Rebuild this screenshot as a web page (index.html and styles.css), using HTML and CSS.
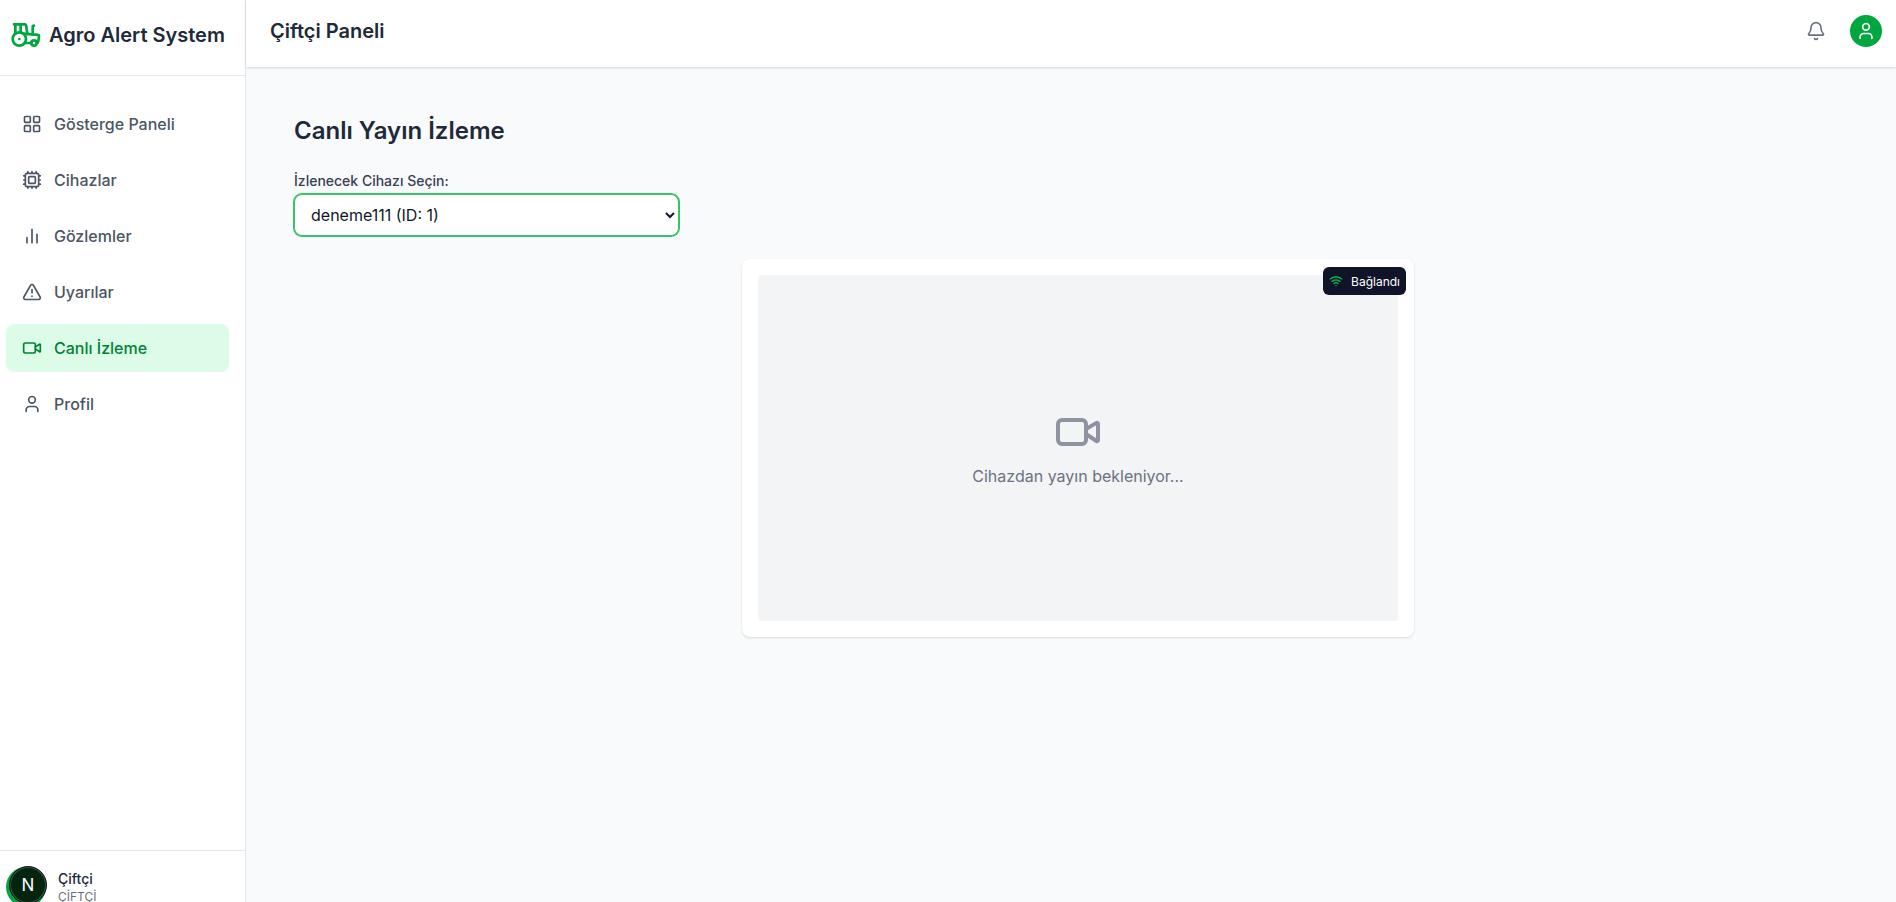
FILE: index.html
```html
<!DOCTYPE html>
<html lang="tr">
<head>
  <meta charset="UTF-8" />
  <meta name="viewport" content="width=device-width, initial-scale=1.0"/>
  <title>Agro Alert System</title>
  <link rel="stylesheet" href="styles.css">
</head>
<body>
  <aside class="sidebar">
    <div class="brand">
      <svg class="icon brand-icon" viewBox="0 0 24 24">
        <path d="m10 11 11 .9a1 1 0 0 1 .8 1.1l-.665 4.158a1 1 0 0 1-.988.842H20"/>
        <path d="M16 18h-5"/>
        <path d="M18 5a1 1 0 0 0-1 1v5.573"/>
        <path d="M3 4h8.129a1 1 0 0 1 .99.863L13 11.246"/>
        <path d="M4 11V4M7 15h.01M8 10.1V4"/>
        <circle cx="18" cy="18" r="2"/>
        <circle cx="7" cy="15" r="5"/>
      </svg>
      <span>Agro Alert System</span>
    </div>

    <nav class="menu">
      <a href="#">
        <svg class="icon" viewBox="0 0 24 24"><rect x="3" y="3" width="7" height="7" rx="1"/><rect x="14" y="3" width="7" height="7" rx="1"/><rect x="14" y="14" width="7" height="7" rx="1"/><rect x="3" y="14" width="7" height="7" rx="1"/></svg>
        Gösterge Paneli
      </a>
      <a href="#">
        <svg class="icon" viewBox="0 0 24 24"><rect x="4" y="4" width="16" height="16" rx="2"/><rect x="8" y="8" width="8" height="8" rx="1"/><path d="M12 2v2M17 2v2M7 2v2M12 20v2M17 20v2M7 20v2M2 12h2M2 17h2M2 7h2M20 12h2M20 17h2M20 7h2"/></svg>
        Cihazlar
      </a>
      <a href="#">
        <svg class="icon" viewBox="0 0 24 24"><path d="M18 20V10M12 20V4M6 20v-6"/></svg>
        Gözlemler
      </a>
      <a href="#">
        <svg class="icon" viewBox="0 0 24 24"><path d="m21.73 18-8-14a2 2 0 0 0-3.48 0l-8 14A2 2 0 0 0 4 21h16a2 2 0 0 0 1.73-3"/><path d="M12 9v4M12 17h.01"/></svg>
        Uyarılar
      </a>
      <a href="#" class="active">
        <svg class="icon" viewBox="0 0 24 24"><path d="m16 13 5.223 3.482a.5.5 0 0 0 .777-.416V7.87a.5.5 0 0 0-.752-.432L16 10.5"/><rect x="2" y="6" width="14" height="12" rx="2"/></svg>
        Canlı İzleme
      </a>
      <a href="#">
        <svg class="icon" viewBox="0 0 24 24"><path d="M19 21v-2a4 4 0 0 0-4-4H9a4 4 0 0 0-4 4v2"/><circle cx="12" cy="7" r="4"/></svg>
        Profil
      </a>
    </nav>

    <div class="account">
      <div class="account-avatar"><span class="dev-badge">N</span></div>
      <div>
        <div class="account-name">Çiftçi</div>
        <div class="account-role">ÇİFTÇİ</div>
      </div>
    </div>
  </aside>

  <div class="page">
    <header class="topbar">
      <h1>Çiftçi Paneli</h1>
      <div class="topbar-actions">
        <svg class="icon bell" viewBox="0 0 24 24"><path d="M10.268 21a2 2 0 0 0 3.464 0M3.262 15.326A1 1 0 0 0 4 17h16a1 1 0 0 0 .74-1.673C19.41 13.956 18 12.499 18 8A6 6 0 0 0 6 8c0 4.499-1.411 5.956-2.738 7.326"/></svg>
        <div class="user">
          <svg class="icon" viewBox="0 0 24 24"><path d="M19 21v-2a4 4 0 0 0-4-4H9a4 4 0 0 0-4 4v2"/><circle cx="12" cy="7" r="4"/></svg>
        </div>
      </div>
    </header>

    <main>
      <h2>Canlı Yayın İzleme</h2>
      <label for="device">İzlenecek Cihazı Seçin:</label>
      <select id="device">
        <option>deneme111 (ID: 1)</option>
      </select>

      <section class="stream-card">
        <div class="status">
          <svg class="icon" viewBox="0 0 24 24"><path d="M12 20h.01M2 8.82a15 15 0 0 1 20 0M5 12.859a10 10 0 0 1 14 0M8.5 16.429a5 5 0 0 1 7 0"/></svg>
          Bağlandı
        </div>
        <div class="stream">
          <svg class="icon" viewBox="0 0 24 24"><path d="m16 13 5.223 3.482a.5.5 0 0 0 .777-.416V7.87a.5.5 0 0 0-.752-.432L16 10.5"/><rect x="2" y="6" width="14" height="12" rx="2"/></svg>
          <p>Cihazdan yayın bekleniyor...</p>
        </div>
      </section>
    </main>
  </div>
</body>
</html>
```
FILE: styles.css
```css
* {
  box-sizing: border-box;
}

body {
  font-family: Inter, 'Liberation Sans', sans-serif;
  background-color: #f9fafb;
  color: #1e2939;
  display: flex;
  margin: 0;
  height: 100vh;
  overflow: hidden;
}

h1, h2, p {
  margin: 0;
}

.icon {
  width: 20px;
  height: 20px;
  flex: none;
  fill: none;
  stroke: currentColor;
  stroke-width: 2;
  stroke-linecap: round;
  stroke-linejoin: round;
}

/* sidebar */
.sidebar {
  width: 246px;
  flex: none;
  height: 920px;
  display: flex;
  flex-direction: column;
  background-color: #fff;
  border-right: 1px solid #e5e7eb;
}

.brand {
  height: 76px;
  display: flex;
  align-items: center;
  gap: 7px;
  padding: 0 0 6px 10px;
  font-size: 20px;
  font-weight: 600;
  border-bottom: 1px solid #e5e7eb;
}

.brand-icon {
  width: 32px;
  height: 32px;
  color: #00a63e;
}

.menu {
  flex: 1;
  display: flex;
  flex-direction: column;
  gap: 8px;
  padding: 24px 16px 0 6px;
}

.menu a {
  display: flex;
  align-items: center;
  gap: 12px;
  height: 48px;
  padding: 0 16px;
  border-radius: 8px;
  font-size: 16px;
  font-weight: 500;
  color: #4a5565;
  text-decoration: none;
}

.menu .active {
  background-color: #dcfce7;
  color: #008236;
}

.account {
  height: 70px;
  display: flex;
  align-items: center;
  gap: 12px;
  padding: 2px 0 0 6px;
  border-top: 1px solid #e5e7eb;
}

.account-avatar {
  position: relative;
  width: 40px;
  height: 40px;
  border-radius: 50%;
  background-color: #00a63e;
}

.dev-badge {
  position: absolute;
  top: -1px;
  left: 3px;
  width: 38px;
  height: 38px;
  border-radius: 50%;
  border: 1px solid #171717;
  box-shadow: inset 0 0 0 1px #3f5548;
  background-color: #04240f;
  color: #fff;
  font-size: 17px;
  line-height: 36px;
  text-align: center;
}

.account-name {
  font-size: 14px;
  font-weight: 500;
  line-height: 20px;
}

.account-role {
  font-size: 12px;
  line-height: 16px;
  color: #6a7282;
}

/* content */
.page {
  flex: 1;
}

.topbar {
  height: 67px;
  display: flex;
  align-items: center;
  justify-content: space-between;
  padding: 0 14px 5px 24px;
  background-color: #fff;
  box-shadow: 0 1px 3px rgba(0, 0, 0, 0.08), 0 1px 2px rgba(0, 0, 0, 0.06);
}

h1 {
  font-size: 20px;
  font-weight: 600;
}

.topbar-actions {
  display: flex;
  align-items: center;
  gap: 24px;
}

.bell {
  color: #6a7282;
}

.user {
  width: 32px;
  height: 32px;
  display: flex;
  align-items: center;
  justify-content: center;
  border-radius: 50%;
  background-color: #00a63e;
  color: #fff;
}

main {
  padding: 48px 34px 0 48px;
}

h2 {
  font-size: 24px;
  font-weight: 600;
  line-height: 32px;
  margin-bottom: 24px;
}

label {
  display: block;
  font-size: 14px;
  font-weight: 500;
  line-height: 20px;
  margin-bottom: 3px;
  color: #364153;
}

select {
  display: block;
  width: 385px;
  height: 42px;
  padding: 0 12px;
  font-family: inherit;
  font-size: 16px;
  color: #101828;
  background-color: #fff;
  border: 1px solid #3fc46b;
  border-radius: 8px;
  box-shadow: 0 0 0 1px #2cc562;
}

.stream-card {
  position: relative;
  width: 672px;
  margin: 23px auto 0;
  padding: 16px;
  background-color: #fff;
  border-radius: 8px;
  box-shadow: 0 1px 3px rgba(0, 0, 0, 0.08), 0 1px 2px rgba(0, 0, 0, 0.06);
}

.stream {
  height: 346px;
  display: flex;
  flex-direction: column;
  align-items: center;
  justify-content: center;
  border-radius: 4px;
  background-color: #f3f4f6;
  color: #6a7282;
}

.stream .icon {
  width: 48px;
  height: 48px;
  margin-bottom: 8px;
  color: #8f93a1;
}

.stream p {
  line-height: 24px;
}

.status {
  position: absolute;
  top: 8px;
  right: 8px;
  height: 28px;
  display: flex;
  align-items: center;
  gap: 8px;
  padding: 0 6px;
  border-radius: 6px;
  background-color: #0f1429;
  color: #fff;
  font-size: 12px;
}

.status .icon {
  width: 14px;
  height: 14px;
  color: #00c950;
}
```
